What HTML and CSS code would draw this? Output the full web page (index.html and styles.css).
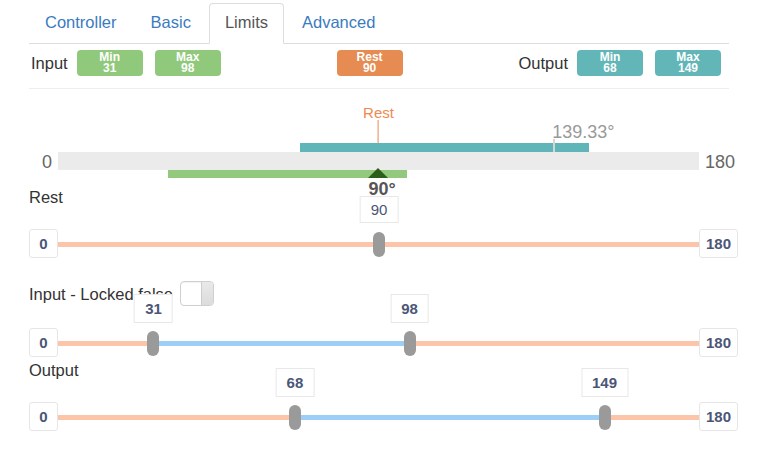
FILE: index.html
```html
<!DOCTYPE html>
<html>
<head>
<meta charset="utf-8">
<link rel="stylesheet" href="styles.css">
</head>
<body>
<div class="app">
  <ul class="tabs">
    <li class="tab">Controller</li>
    <li class="tab">Basic</li>
    <li class="tab tab-active">Limits</li>
    <li class="tab">Advanced</li>
  </ul>

  <div class="summary">
    <div class="group">
      <span class="group-label">Input</span>
      <span class="badge badge-in"><span>Min</span><span>31</span></span>
      <span class="badge badge-in"><span>Max</span><span>98</span></span>
    </div>
    <span class="badge badge-rest"><span>Rest</span><span>90</span></span>
    <div class="group">
      <span class="group-label">Output</span>
      <span class="badge badge-out"><span>Min</span><span>68</span></span>
      <span class="badge badge-out"><span>Max</span><span>149</span></span>
    </div>
  </div>

  <div class="gauge">
    <span class="gauge-end gauge-min">0</span>
    <div class="gauge-bar">
      <div class="rest-mark" style="left:50%"><span>Rest</span><i></i></div>
      <div class="range range-out" style="left:37.778%;width:45%"></div>
      <div class="tick" style="left:77.406%"><span>139.33°</span></div>
      <div class="range range-in" style="left:17.222%;width:37.222%"></div>
      <div class="pointer" style="left:50%"><i></i><span>90°</span></div>
    </div>
    <span class="gauge-end">180</span>
  </div>

  <div class="field field-rest">
    <div class="field-label">Rest</div>
    <div class="slider">
      <div class="slider-track"></div>
      <div class="slider-rail">
        <div class="slider-handle" style="left:50%"></div>
        <div class="slider-value slider-value-plain" style="left:50%">90</div>
      </div>
      <div class="slider-end slider-min">0</div>
      <div class="slider-end slider-max">180</div>
    </div>
  </div>

  <div class="field field-input">
    <div class="field-label">Input - Locked false <span class="toggle"><span class="toggle-knob"></span></span></div>
    <div class="slider">
      <div class="slider-track"></div>
      <div class="slider-rail">
        <div class="slider-fill" style="left:17.222%;width:37.222%"></div>
        <div class="slider-handle" style="left:17.222%"></div>
        <div class="slider-handle" style="left:54.444%"></div>
        <div class="slider-value" style="left:17.222%">31</div>
        <div class="slider-value" style="left:54.444%">98</div>
      </div>
      <div class="slider-end slider-min">0</div>
      <div class="slider-end slider-max">180</div>
    </div>
  </div>

  <div class="field field-output">
    <div class="field-label">Output</div>
    <div class="slider">
      <div class="slider-track"></div>
      <div class="slider-rail">
        <div class="slider-fill" style="left:37.778%;width:45%"></div>
        <div class="slider-handle" style="left:37.778%"></div>
        <div class="slider-handle" style="left:82.778%"></div>
        <div class="slider-value" style="left:37.778%">68</div>
        <div class="slider-value" style="left:82.778%">149</div>
      </div>
      <div class="slider-end slider-min">0</div>
      <div class="slider-end slider-max">180</div>
    </div>
  </div>
</div>
</body>
</html>
```

FILE: styles.css
```css
html, body {
  margin: 0;
  padding: 0;
  background: #fff;
}
body {
  font-family: "Liberation Sans", Arial, sans-serif;
  color: #333;
}
.app {
  width: 700px;
  padding: 3px 0 0 29px;
}

/* tabs */
.tabs {
  display: flex;
  list-style: none;
  margin: 0;
  padding: 0;
  border-bottom: 1px solid #ddd;
}
.tab {
  margin: 0 2px -1px 0;
  padding: 9px 15px 11px;
  font-size: 16.5px;
  line-height: 19px;
  color: #3a7bbf;
  border: 1px solid transparent;
  border-radius: 4px 4px 0 0;
}
.tab-active {
  color: #555;
  background: #fff;
  border-color: #ddd #ddd transparent;
}

/* summary */
.summary {
  display: flex;
  justify-content: space-between;
  align-items: center;
  padding: 6px 8px 12px 2px;
  border-bottom: 1px solid #eee;
}
.group {
  display: flex;
  align-items: center;
  gap: 12px;
}
.group-label {
  font-size: 16.5px;
  line-height: 20px;
  color: #333;
  margin-right: -3px;
}
.badge {
  width: 66px;
  height: 26px;
  border-radius: 4px;
  display: flex;
  flex-direction: column;
  align-items: center;
  justify-content: center;
  color: #fff;
  font-weight: bold;
  font-size: 12px;
  line-height: 11.5px;
}
.badge span {
  display: block;
  height: 11px;
  overflow: visible;
}
.badge-in { background: #91c97c; }
.badge-rest { background: #e68b52; }
.badge-out { background: #62b6b8; }

/* gauge */
.gauge {
  box-sizing: border-box;
  height: 98px;
  padding-top: 63px;
  display: flex;
  align-items: flex-start;
  gap: 6px;
}
.gauge-end {
  flex: none;
  font-size: 18px;
  line-height: 20px;
  color: #666;
}
.gauge-min {
  width: 23px;
  text-align: right;
}
.gauge-bar {
  flex: none;
  position: relative;
  width: 641px;
  height: 18px;
  background: #ebebeb;
}
.range {
  position: absolute;
  height: 8px;
}
.range-out {
  bottom: 100%;
  height: 9px;
  background: #60b5b8;
}
.range-in {
  top: 100%;
  background: #93c97d;
}
.rest-mark {
  position: absolute;
  bottom: calc(100% + 9px);
  transform: translateX(-50%);
  display: flex;
  flex-direction: column;
  align-items: center;
  color: #ee8a50;
}
.rest-mark span {
  font-size: 15px;
  line-height: 15px;
}
.rest-mark i {
  width: 1px;
  height: 23px;
  background: #ee8a50;
}
.tick {
  position: absolute;
  bottom: 100%;
  width: 2px;
  height: 13px;
  margin-left: -1px;
  background: #d6d6d6;
}
.tick span {
  position: absolute;
  left: -1px;
  bottom: calc(100% - 2px);
  font-size: 18px;
  line-height: 18px;
  color: #999;
  white-space: nowrap;
}
.pointer {
  position: absolute;
  top: calc(100% - 2px);
  width: 0;
}
.pointer i {
  display: block;
  width: 0;
  height: 0;
  margin-left: -10.5px;
  border-left: 10.5px solid transparent;
  border-right: 10.5px solid transparent;
  border-bottom: 10px solid #2b5e1b;
}
.pointer span {
  position: absolute;
  top: 12px;
  left: -10px;
  font-size: 18px;
  line-height: 18px;
  font-weight: bold;
  color: #555;
  white-space: nowrap;
}

/* fields */
.field-label {
  display: flex;
  align-items: center;
  gap: 7px;
  font-size: 16.5px;
  line-height: 20px;
  color: #333;
}
.field-input {
  margin-top: 23px;
}
.field-output {
  margin-top: 3px;
}
.toggle {
  position: relative;
  box-sizing: border-box;
  width: 34px;
  height: 25px;
  border: 1px solid #cfcfcf;
  border-radius: 4px;
  background: #fff;
  overflow: hidden;
  box-shadow: inset 0 1px 1px rgba(0,0,0,0.05);
}
.toggle-knob {
  position: absolute;
  top: 0;
  right: 0;
  bottom: 0;
  width: 11px;
  border-left: 1px solid #cdcdcd;
  background: linear-gradient(#e9e9e9, #dcdcdc);
}

/* slider */
.slider {
  position: relative;
  height: 51px;
}
.slider-track {
  position: absolute;
  left: 29px;
  right: 30px;
  top: 35px;
  height: 5px;
  background: #fcc5a9;
}
.slider-rail {
  position: absolute;
  left: 6px;
  right: 6px;
  top: 0;
  bottom: 0;
}
.slider-fill {
  position: absolute;
  top: 35px;
  height: 5px;
  background: #9dcff6;
}
.slider-handle {
  position: absolute;
  top: 25px;
  width: 12px;
  height: 25px;
  margin-left: -6px;
  border-radius: 6px;
  background: #9a9a9a;
}
.slider-value {
  position: absolute;
  top: -12px;
  box-sizing: border-box;
  height: 29px;
  padding: 0 10px;
  transform: translateX(-50%);
  background: #fff;
  border: 1px solid #e8e8e8;
  font-size: 15px;
  line-height: 27px;
  font-weight: bold;
  color: #4b5677;
  white-space: nowrap;
}
.slider-value-plain {
  top: -11px;
  height: 27px;
  line-height: 25px;
  font-weight: normal;
}
.slider-end {
  position: absolute;
  top: 22px;
  box-sizing: border-box;
  height: 29px;
  background: #fff;
  border: 1px solid #e6e6e6;
  border-radius: 3px;
  font-size: 15px;
  line-height: 27px;
  font-weight: bold;
  color: #4b5677;
  text-align: center;
}
.slider-min {
  left: 0;
  width: 29px;
}
.slider-max {
  left: 670px;
  width: 39px;
}
```
